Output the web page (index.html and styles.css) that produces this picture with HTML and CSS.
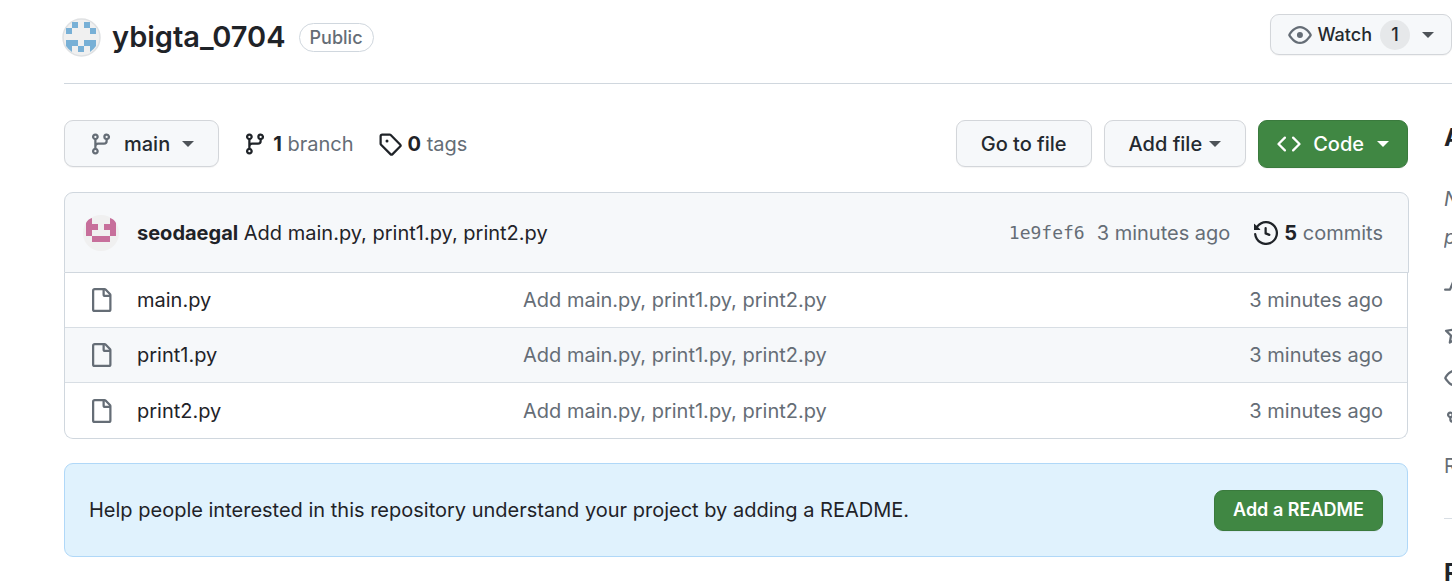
FILE: index.html
```html
<!DOCTYPE html>
<html lang="en">
<head>
<meta charset="utf-8">
<title>ybigta_0704</title>
<link rel="stylesheet" href="styles.css">
</head>
<body>
<svg class="sprite" aria-hidden="true">
  <symbol id="branch" viewBox="0 0 16 16"><path d="M9.5 3.25a2.25 2.25 0 1 1 3 2.122V6A2.5 2.5 0 0 1 10 8.5H6a1 1 0 0 0-1 1v1.128a2.251 2.251 0 1 1-1.5 0V5.372a2.25 2.25 0 1 1 1.5 0v1.836A2.493 2.493 0 0 1 6 7h4a1 1 0 0 0 1-1v-.628A2.25 2.25 0 0 1 9.5 3.25Zm-6 0a.75.75 0 1 0 1.5 0 .75.75 0 0 0-1.5 0Zm8.25-.75a.75.75 0 1 0 0 1.5.75.75 0 0 0 0-1.5ZM4.25 12a.75.75 0 1 0 0 1.5.75.75 0 0 0 0-1.5Z"/></symbol>
  <symbol id="tag" viewBox="0 0 16 16"><path d="M1 7.775V2.75C1 1.784 1.784 1 2.75 1h5.025c.464 0 .91.184 1.238.513l6.25 6.25a1.75 1.75 0 0 1 0 2.474l-5.026 5.026a1.75 1.75 0 0 1-2.474 0l-6.25-6.25A1.752 1.752 0 0 1 1 7.775Zm1.5 0c0 .066.026.13.073.177l6.25 6.25a.25.25 0 0 0 .354 0l5.025-5.025a.25.25 0 0 0 0-.354l-6.25-6.25a.25.25 0 0 0-.177-.073H2.75a.25.25 0 0 0-.25.25ZM6 5a1 1 0 1 1 0 2 1 1 0 0 1 0-2Z"/></symbol>
  <symbol id="eye" viewBox="0 0 16 16"><path d="M8 2c1.981 0 3.671.992 4.933 2.078 1.27 1.091 2.187 2.345 2.637 3.023a1.62 1.62 0 0 1 0 1.798c-.45.678-1.367 1.932-2.637 3.023C11.67 13.008 9.981 14 8 14c-1.981 0-3.671-.992-4.933-2.078C1.797 10.83.88 9.576.43 8.898a1.62 1.62 0 0 1 0-1.798c.45-.677 1.367-1.931 2.637-3.022C4.33 2.992 6.019 2 8 2ZM1.679 7.932a.12.12 0 0 0 0 .136c.411.622 1.241 1.75 2.366 2.717C5.176 11.758 6.527 12.5 8 12.5c1.473 0 2.825-.742 3.955-1.715 1.124-.967 1.954-2.096 2.366-2.717a.12.12 0 0 0 0-.136c-.412-.621-1.242-1.75-2.366-2.717C10.824 4.242 9.473 3.5 8 3.5c-1.473 0-2.825.742-3.955 1.715-1.124.967-1.954 2.096-2.366 2.717ZM8 10a2 2 0 1 1-.001-3.999A2 2 0 0 1 8 10Z"/></symbol>
  <symbol id="code" viewBox="0 0 16 16"><path d="m11.28 3.22 4.25 4.25a.75.75 0 0 1 0 1.06l-4.25 4.25a.749.749 0 0 1-1.06-1.06L13.94 8l-3.72-3.72a.749.749 0 0 1 1.06-1.06Zm-6.56 0a.749.749 0 0 1 1.06 1.06L2.06 8l3.72 3.72a.749.749 0 0 1-1.06 1.06L.47 8.53a.75.75 0 0 1 0-1.06Z"/></symbol>
  <symbol id="history" viewBox="0 0 16 16"><path d="m.427 1.927 1.215 1.215a8.002 8.002 0 1 1-1.6 5.685.75.75 0 1 1 1.493-.154 6.5 6.5 0 1 0 1.18-4.458l1.358 1.358A.25.25 0 0 1 3.896 6H.25A.25.25 0 0 1 0 5.75V2.104a.25.25 0 0 1 .427-.177ZM7.75 4a.75.75 0 0 1 .75.75v2.992l2.028.812a.75.75 0 0 1-.557 1.392l-2.5-1A.751.751 0 0 1 7 8.25v-3.5A.75.75 0 0 1 7.75 4Z"/></symbol>
  <symbol id="file" viewBox="0 0 16 16"><path d="M2 1.75C2 .784 2.784 0 3.75 0h6.586c.464 0 .909.184 1.237.513l2.914 2.914c.329.328.513.773.513 1.237v9.586A1.75 1.75 0 0 1 13.25 16h-9.5A1.75 1.75 0 0 1 2 14.25Zm1.75-.25a.25.25 0 0 0-.25.25v12.5c0 .138.112.25.25.25h9.5a.25.25 0 0 0 .25-.25V6h-2.75A1.75 1.75 0 0 1 9 4.25V1.5Zm6.75.062V4.25c0 .138.112.25.25.25h2.688l-.011-.013-2.914-2.914-.013-.011Z"/></symbol>
  <symbol id="pulse" viewBox="0 0 16 16"><path d="M6 2c.306 0 .582.187.696.471L10 10.731l1.304-3.26A.751.751 0 0 1 12 7h3.25a.75.75 0 0 1 0 1.5h-2.742l-1.812 4.528a.751.751 0 0 1-1.392 0L6 4.77 4.696 8.03A.75.75 0 0 1 4 8.5H.75a.75.75 0 0 1 0-1.5h2.742l1.812-4.529A.751.751 0 0 1 6 2Z"/></symbol>
  <symbol id="star" viewBox="0 0 16 16"><path d="M8 .25a.75.75 0 0 1 .673.418l1.882 3.815 4.21.612a.75.75 0 0 1 .416 1.279l-3.046 2.97.719 4.192a.751.751 0 0 1-1.088.791L8 12.347l-3.766 1.98a.75.75 0 0 1-1.088-.79l.72-4.194L.818 6.374a.75.75 0 0 1 .416-1.28l4.21-.611L7.327.668A.75.75 0 0 1 8 .25Zm0 2.445L6.615 5.5a.75.75 0 0 1-.564.41l-3.097.45 2.24 2.184a.75.75 0 0 1 .216.664l-.528 3.084 2.769-1.456a.75.75 0 0 1 .698 0l2.77 1.456-.53-3.084a.75.75 0 0 1 .216-.664l2.24-2.183-3.096-.45a.75.75 0 0 1-.564-.41L8 2.694Z"/></symbol>
  <symbol id="fork" viewBox="0 0 16 16"><path d="M5 5.372v.878c0 .414.336.75.75.75h4.5a.75.75 0 0 0 .75-.75v-.878a2.25 2.25 0 1 1 1.5 0v.878a2.25 2.25 0 0 1-2.25 2.25h-1.5v2.128a2.251 2.251 0 1 1-1.5 0V8.5h-1.5A2.25 2.25 0 0 1 3.5 6.25v-.878a2.25 2.25 0 1 1 1.5 0ZM5 3.25a.75.75 0 1 0-1.5 0 .75.75 0 0 0 1.5 0Zm6.75.75a.75.75 0 1 0 0-1.5.75.75 0 0 0 0 1.5Zm-3 8.75a.75.75 0 1 0-1.5 0 .75.75 0 0 0 1.5 0Z"/></symbol>
</svg>

<div class="page">
  <header class="repo-head">
    <svg class="avatar" viewBox="0 0 39 39" aria-hidden="true">
      <circle cx="19.5" cy="19.5" r="18.5" fill="#f0f0f0" stroke="#dfe1e3" stroke-width="1.5"/>
      <path fill="#78b0d6" d="M10 4h6v6h-6zM22 4h6v6h-6zM4 10h6v6H4zM28 10h6v6h-6zM4 22h12v6h-6v6q-4-3-6-6zM22 22h12v6q-2 3-6 6v-6h-6zM16 28h6v6h-6z"/>
    </svg>
    <h1 class="repo-name">ybigta_0704</h1>
    <span class="badge">Public</span>
    <button class="btn watch" type="button"><svg class="icon muted"><use href="#eye"/></svg>Watch<span class="counter">1</span><span class="caret"></span></button>
  </header>

  <div class="layout">
    <main class="main">
      <nav class="toolbar" aria-label="Repository">
        <button class="btn branch-btn" type="button"><svg class="icon muted"><use href="#branch"/></svg>main<span class="caret"></span></button>
        <a class="stat" href="#"><svg class="icon"><use href="#branch"/></svg><span><strong>1</strong> branch</span></a>
        <a class="stat" href="#"><svg class="icon"><use href="#tag"/></svg><span><strong>0</strong> tags</span></a>
        <div class="actions">
          <button class="btn" type="button">Go to file</button>
          <button class="btn add-file" type="button">Add file<span class="caret"></span></button>
          <button class="btn green code-btn" type="button"><svg class="icon"><use href="#code"/></svg>Code<span class="caret"></span></button>
        </div>
      </nav>

      <section class="files">
        <div class="commit">
          <svg class="avatar small" viewBox="0 0 36 36" aria-hidden="true">
            <circle cx="18" cy="18" r="18" fill="#f0f0f0"/>
            <path fill="#c76f9b" d="M3 8q2-4 6-5v6h6v6H9v6H3zM33 8q-2-4-6-5v6h-6v6h6v6h6zM9 21h18v6H9z"/>
          </svg>
          <p class="commit-text"><a class="author" href="#">seodaegal</a> <a href="#">Add main.py, print1.py, print2.py</a></p>
          <a class="sha" href="#">1e9fef6</a>
          <span class="when">3 minutes ago</span>
          <a class="stat commits" href="#"><svg class="icon"><use href="#history"/></svg><span><strong>5</strong> commits</span></a>
        </div>
        <table class="file-table">
          <tbody>
            <tr><td class="c-icon"><svg class="icon muted"><use href="#file"/></svg></td><td class="c-name"><a href="#">main.py</a></td><td class="c-msg"><a href="#">Add main.py, print1.py, print2.py</a></td><td class="c-when">3 minutes ago</td></tr>
            <tr><td class="c-icon"><svg class="icon muted"><use href="#file"/></svg></td><td class="c-name"><a href="#">print1.py</a></td><td class="c-msg"><a href="#">Add main.py, print1.py, print2.py</a></td><td class="c-when">3 minutes ago</td></tr>
            <tr><td class="c-icon"><svg class="icon muted"><use href="#file"/></svg></td><td class="c-name"><a href="#">print2.py</a></td><td class="c-msg"><a href="#">Add main.py, print1.py, print2.py</a></td><td class="c-when">3 minutes ago</td></tr>
          </tbody>
        </table>
      </section>

      <section class="notice">
        <p>Help people interested in this repository understand your project by adding a README.</p>
        <button class="btn green readme-btn" type="button">Add a README</button>
      </section>
    </main>

    <aside class="side">
      <h2>About</h2>
      <p class="about">No description, website, or topics<br>provided.</p>
      <ul class="links">
        <li><svg class="icon"><use href="#pulse"/></svg></li>
        <li><svg class="icon"><use href="#star"/></svg></li>
        <li><svg class="icon"><use href="#eye"/></svg></li>
        <li><svg class="icon"><use href="#fork"/></svg></li>
        <li>Report repository</li>
      </ul>
      <h2 class="releases">Releases</h2>
    </aside>
  </div>
</div>
</body>
</html>
```
FILE: styles.css
```css
* { box-sizing: border-box; }

body {
  margin: 0;
  background: #fff;
  color: #1f2328;
  font: 20px/30px Inter, "Liberation Sans", sans-serif;
  overflow: hidden;
}

h1, h2, p, ul { margin: 0; padding: 0; }
a { color: inherit; text-decoration: none; }
strong { color: #1f2328; font-weight: 700; }

.sprite { display: none; }
.icon { width: 24px; height: 24px; fill: currentColor; flex: none; }
.icon.muted { color: #656d76; }

.page { padding-left: 64px; }

.repo-head {
  display: flex;
  align-items: center;
  height: 84px;
  padding-bottom: 9px;
  border-bottom: 1px solid #d0d7de;
}
.avatar { width: 39px; height: 39px; flex: none; margin-left: -2px; }
.repo-name { margin-left: 11px; font-size: 29px; line-height: 36px; font-weight: 600; }
.badge {
  margin-left: 13px;
  padding: 0 10px;
  border: 1px solid #d0d7de;
  border-radius: 15px;
  color: #656d76;
  font-size: 18px;
  line-height: 27px;
  font-weight: 500;
}

.btn {
  display: flex;
  align-items: center;
  height: 47px;
  padding: 0 24px;
  border: 1px solid #d3d6da;
  border-radius: 9px;
  background: #f6f8fa;
  color: #24292f;
  box-shadow: 0 1px 1px rgba(31, 35, 40, 0.05);
  font: 500 20px/30px Inter, "Liberation Sans", sans-serif;
  white-space: nowrap;
}
.caret {
  border: 6px solid transparent;
  border-top-color: currentColor;
  border-bottom: 0;
  opacity: 0.8;
}
.green { background: #408743; border-color: #3a7a3d; color: #fff; }
.green .caret { opacity: 1; }

.watch { align-self: flex-start; margin: 14px 0 0 auto; height: 41px; padding: 0 17px; font-size: 18px; }
.watch .icon { margin-right: 6px; }
.counter {
  min-width: 30px;
  margin: 0 12px 0 8px;
  border-radius: 15px;
  background: #e6e8ea;
  text-align: center;
}

.layout {
  display: grid;
  grid-template-columns: minmax(0, 1fr) 8px;
  gap: 36px;
  padding-top: 36px;
}

.toolbar { display: flex; align-items: center; height: 48px; margin-bottom: 24px; }
.branch-btn { align-self: flex-start; }
.branch-btn .icon { margin-right: 11px; }
.branch-btn .caret { margin-left: 12px; }
.stat { display: flex; align-items: center; gap: 6px; margin-left: 24px; white-space: nowrap; }
.stat span { color: #656d76; }
.actions { display: flex; gap: 12px; margin-left: auto; }
.add-file .caret { margin-left: 7px; }
.code-btn { height: 48px; padding: 0 18px; }
.code-btn .icon { margin-right: 12px; }
.code-btn .caret { margin-left: 13px; }

.commit {
  display: flex;
  align-items: center;
  height: 81px;
  margin-right: -1px;
  padding: 0 25px 0 20px;
  border: 1px solid #d0d7de;
  border-radius: 9px 9px 0 0;
  background: #f6f8fa;
}
.small { width: 36px; height: 36px; }
.commit-text { margin: 0 auto 0 18px; }
.author { font-weight: 700; }
.sha { margin-right: 12px; color: #656d76; font: 18px/30px "DejaVu Sans Mono", monospace; }
.when { color: #656d76; }

.file-table {
  width: 100%;
  border: 1px solid #d0d7de;
  border-top: 0;
  border-radius: 0 0 9px 9px;
  border-spacing: 0;
  table-layout: fixed;
}
.file-table td { height: 55px; padding: 0; border-bottom: 1px solid #d8dee4; }
.file-table tr:last-child td { border-bottom: 0; }
.file-table tr:nth-child(even) td { background: #f6f8fa; }
.file-table .c-icon { width: 72px; padding-left: 24px; }
.c-icon .icon { display: block; }
.c-name { width: 386px; }
.c-msg { color: #656d76; }
.file-table .c-when { width: 240px; padding-right: 24px; color: #656d76; text-align: right; }

.notice {
  display: flex;
  align-items: center;
  justify-content: space-between;
  height: 94px;
  margin-top: 24px;
  padding: 0 24px;
  border: 1px solid #b0d8f8;
  border-radius: 9px;
  background: #e0f2fd;
}
.readme-btn { height: 41px; padding: 0 18px; font-size: 18px; font-weight: 600; }

.side { overflow: hidden; color: #656d76; white-space: nowrap; }
.side h2 { color: #1f2328; font-size: 24px; line-height: 36px; font-weight: 700; }
.about { margin-top: 24px; font-style: italic; line-height: 38px; }
.links { padding: 12px 0 30px; border-bottom: 1px solid #d8dee4; list-style: none; }
.links li { display: flex; align-items: center; height: 44px; }
.side .releases { margin-top: 36px; }
```
